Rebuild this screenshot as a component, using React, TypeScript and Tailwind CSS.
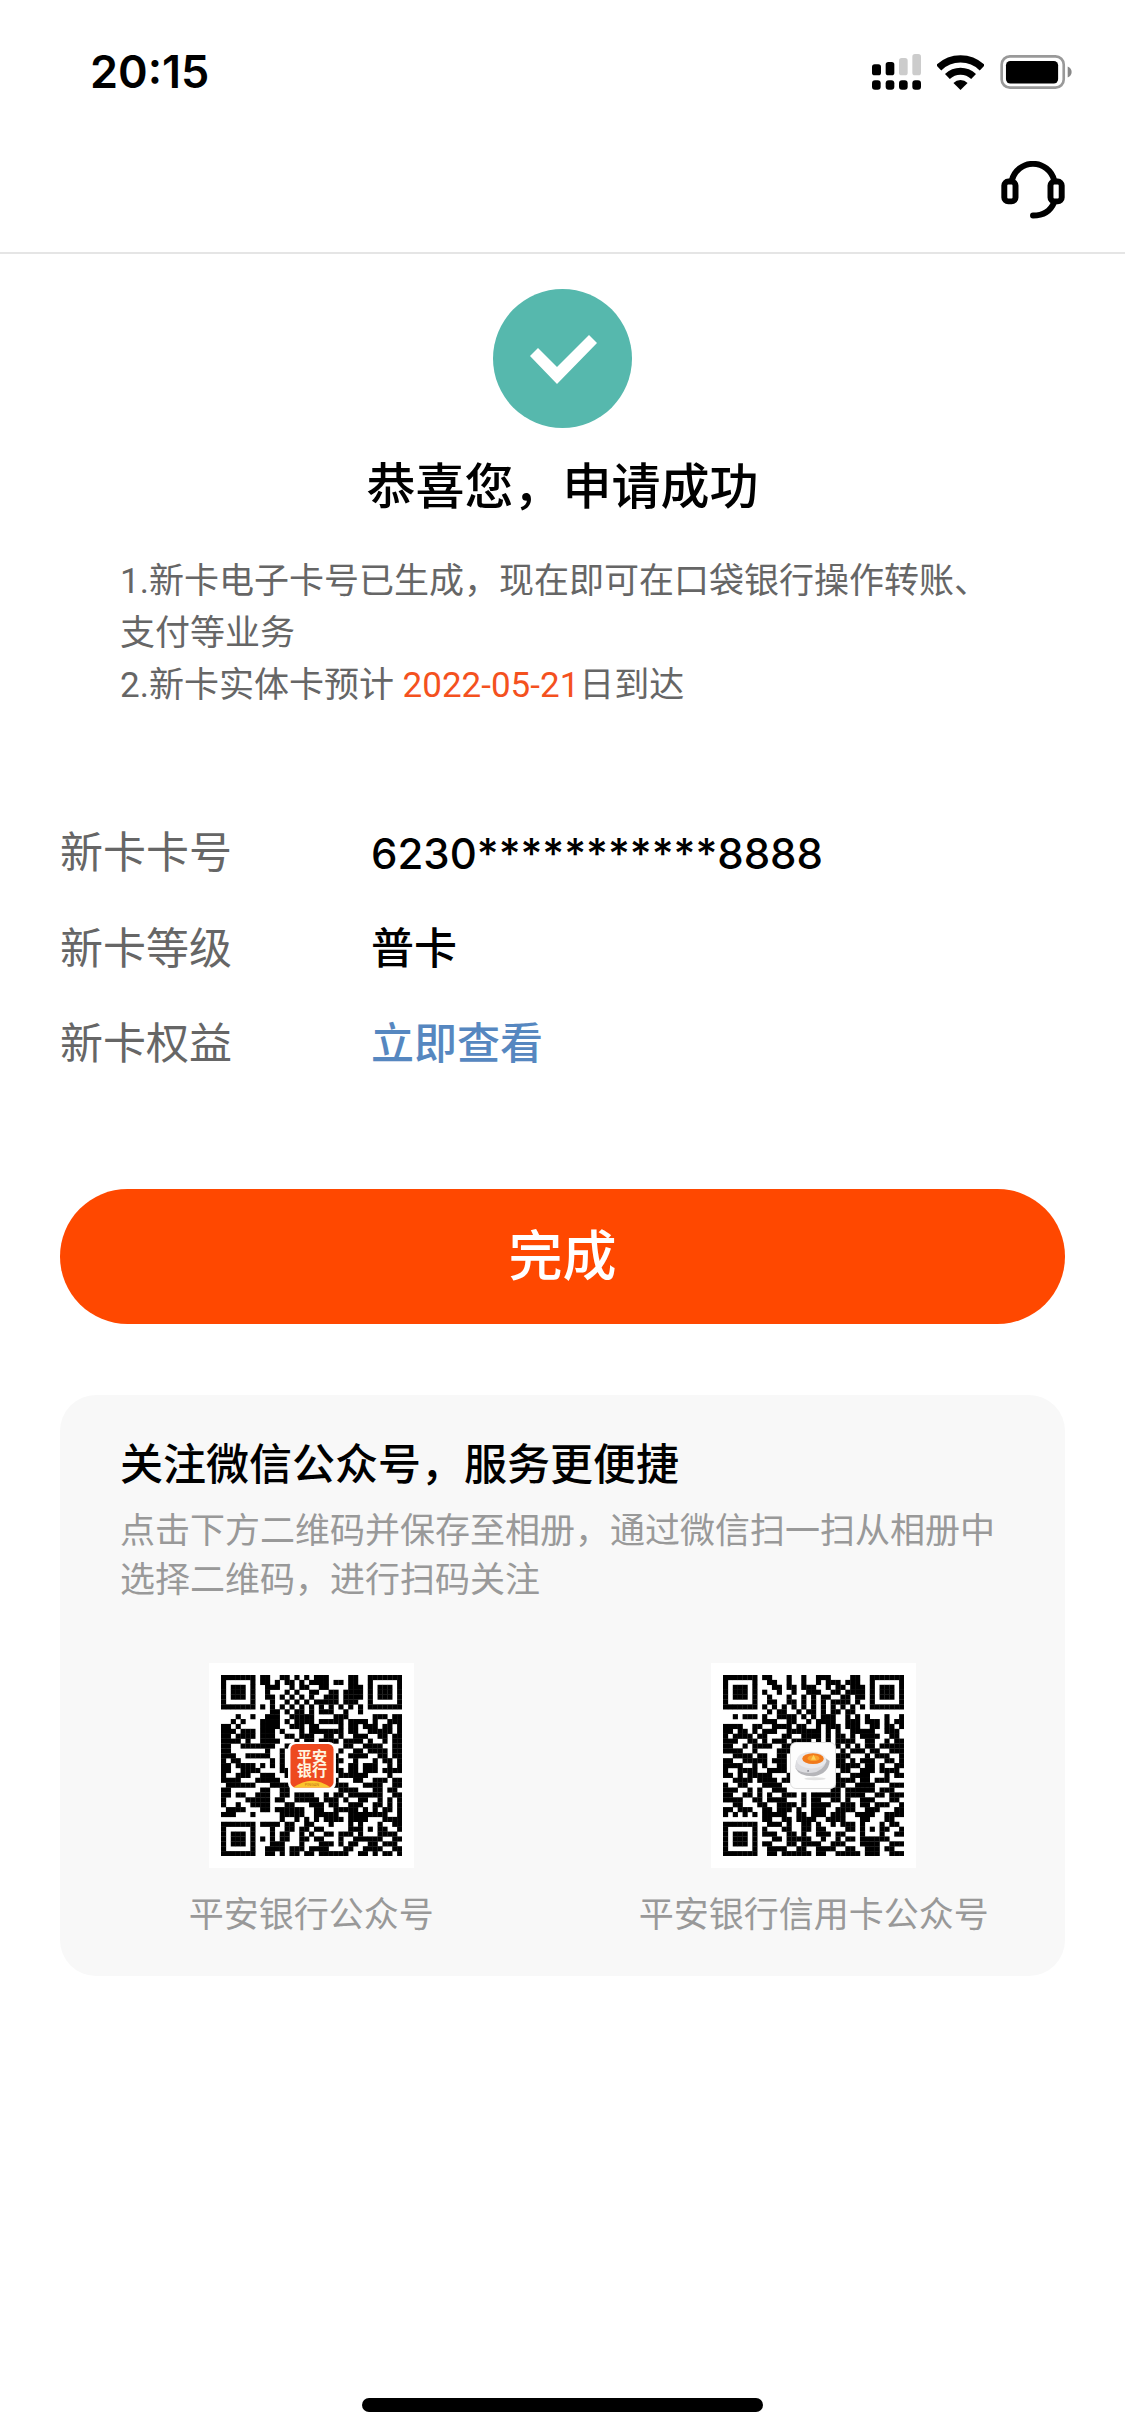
import type { ReactNode } from "react"

// "#" is a dark module
const ACCOUNT_QR = [
  "#######.##..##.#.#.###....##..#######",
  "#.....#.##.#.##.#.####.##.##..#.....#",
  "#.###.#..###..#.##..##....###.#.###.#",
  "#.###.#..#...#.#..##..##.####.#.###.#",
  "#.###.#..##.#.#.#.#..###.####.#.###.#",
  "#.....#...#..#.#.#.#####.###..#.....#",
  "#######.#.#.#.#.#.#.#.#.#.#.#.#######",
  "..........##.#.##.#.###..#..#........",
  "...#..#..###..#####....###.....###.##",
  "..#.#...####.#.####.#####.####.#..###",
  "##.#....####..###.##....#.##.###.##.#",
  "###.###.###.#...#.#######.##..#####.#",
  "##.####.###..##.###..##.#..###..##.##",
  "####.#..####...#.##.####.####.#..#.##",
  "##..#######..##..........##..####..##",
  "##.......#..#...........#..##.####.##",
  "###..#####..#..........#..####..##.##",
  "#.##......#.#..........##..#...#.##.#",
  "##.####.#.#.#..........#..##.###..#.#",
  "##..####....##.........##.##.###.####",
  "#..###..###..##.........######....#..",
  "####...#####...........#...##..###.##",
  ".######...####.........###...####..##",
  "##......##..##..........####...##.##.",
  "##.##..###..##.####..#.##.#######..##",
  "#....#####.##..#####.###.#..##..#.#.#",
  "#..#..####...##...###.##..###..##.#.#",
  ".####...##.######..##..#####.#.#.##.#",
  "###...#.....#####..#####..########..#",
  "............#..#.#.#.####.####...####",
  "#######.####.##..##...#...#.#...#..##",
  "#.....#...#..##.##.##.....###.#.##..#",
  "#.###.#...#.##..#.#..##.###.#...####.",
  "#.###.#.#.#.##..##.##...#..######..##",
  "#.###.#...###...#...###.#.##..##.###.",
  "#.....#..####.###.####...##..####..##",
  "#######..##.#.##.##.######..##.#.##.#",
]

const CREDIT_QR = [
  "#######.##...#..#..###....##..#######",
  "#.....#..##..#..#..#.###.###..#.....#",
  "#.###.#...##.##.###..#.##.###.#.###.#",
  "#.###.#.#..#..#..###..##.####.#.###.#",
  "#.###.#..#...#..#.#.##..##.##.#.###.#",
  "#.....#..##..##.#.#.#.####.#..#.....#",
  "#######.#.#.#.#.#.#.#.#.#.#.#.#######",
  ".........#.##..#.##.#.##.##..........",
  "..#.###.#..####.#.#.###..#.#.#...#..#",
  "........###..##..#.####..###.###.#.##",
  "####..##..####.##..#.###.###..##.##.#",
  "##.##.#.###..#######.#.#..#####..###.",
  "#.####.##...##..####.#.##.#.####..##.",
  "###..##.#.###.####.#.#.####..##..#.##",
  "##..#.####..##.........#.#.#.##.#####",
  "####..#....###..........#.###.##..###",
  "..####.##..##..........###...#.###..#",
  "##..#####.###..........##.#.###..##.#",
  "####..#.#..##..........#####.##.#..##",
  "#..####..####...........##..###.####.",
  "##.#.#####...#.........#..####...#.##",
  "..####.####.##.........####.##.###...",
  "#..##...####...........##..####...###",
  "###..#.#..###.........##.######.###..",
  "##..##.#.#..###.#.######.####..##.###",
  "####..##.####...#.##..##.#..###...##.",
  "..##...##..####.#.####..###.##.###..#",
  "##.###..##.###.#..###..####..###...##",
  "#.#.#.#.#####..##.###.###..####..####",
  "........##..##.####..####...##...##..",
  "#######..###.#..##.#..#.###.#...#.##.",
  "#.....#.#...##..##.##....##.#.#.##..#",
  "#.###.#.###..##.#..###.##...#...#..##",
  "#.###.#...##.#####..#..#.##.######...",
  "#.###.#.##...##.####..###...####..###",
  "#.....#..####..##..####..##..###.##..",
  "#######..##.######.##..#####.###..###",
]

const details = [
  { label: "新卡卡号", value: "6230***********8888" },
  { label: "新卡等级", value: "普卡" },
  { label: "新卡权益", value: "立即查看", href: "#benefits" },
]

function SignalIcon() {
  return (
    <svg viewBox="0 0 147 108" className="w-[49px] h-9" aria-hidden="true">
      <rect x="0" y="31" width="27" height="33" rx="8" />
      <rect x="41" y="24" width="26" height="40" rx="8" />
      <rect x="81" y="12" width="26" height="52" rx="8" fill="#cccccc" />
      <rect x="121" y="0" width="26" height="64" rx="8" fill="#cccccc" />
      {[0, 41, 81, 121].map((x) => (
        <rect key={x} x={x} y="79" width="26" height="28" rx="9" />
      ))}
    </svg>
  )
}

function WifiIcon() {
  return (
    <svg viewBox="0 0 140 104" className="w-[47px] h-[35px]" aria-hidden="true">
      <path d="M5 38A93 93 0 0 1 135 38" fill="none" stroke="#000" strokeWidth="22" />
      <path d="M31 64A57 57 0 0 1 109 64" fill="none" stroke="#000" strokeWidth="21" />
      <path d="M70 104L49 83A30 30 0 0 1 91 83Z" />
    </svg>
  )
}

function BatteryIcon() {
  return (
    <svg viewBox="0 0 216 103" className="w-[72px] h-[34px]" aria-hidden="true">
      <rect x="4" y="4" width="188" height="95" rx="25" fill="none" stroke="#999999" strokeWidth="8" />
      <rect x="17" y="18" width="158" height="68" rx="13" />
      <path d="M204 35Q216 40 216 51.5T204 68Z" fill="#888888" />
    </svg>
  )
}

function HeadsetIcon() {
  return (
    <svg viewBox="0 0 194 173" className="w-16 h-[58px]" fill="none" stroke="#000" strokeWidth="18" strokeLinecap="round" aria-hidden="true">
      <path d="M33 57A66 66 0 0 1 161 57" />
      <rect x="10" y="61" width="34" height="60" rx="12" />
      <rect x="150" y="61" width="34" height="60" rx="12" />
      <path d="M161 124C151 148 130 164 97 164" />
    </svg>
  )
}

function QrCode({ rows, name, children }: { rows: string[]; name: string; children: ReactNode }) {
  return (
    <div className="bg-white p-3">
      <svg viewBox="0 0 370 370" className="size-[181px]" role="img" aria-label={name}>
        {rows.map((row, y) =>
          [...row].map((cell, x) =>
            cell === "#" ? <rect key={`${x}-${y}`} x={x * 10} y={y * 10} width="10.5" height="10.5" /> : null
          )
        )}
        {children}
      </svg>
    </div>
  )
}

function BankLogo() {
  return (
    <>
      <rect x="137" y="137" width="98" height="98" rx="14" fill="#ffffff" />
      <rect x="142" y="141" width="88" height="89" rx="11" fill="#ee4a1f" />
      <path d="M148 230Q186 202 224 230Z" fill="#fbc52d" />
      <g fill="#fff6e0" fontSize="31" fontWeight="700" textAnchor="middle">
        <text x="186" y="178">平安</text>
        <text x="186" y="207">银行</text>
      </g>
      <text x="186" y="227" fill="#c9761a" fontSize="8" textAnchor="middle">PINGAN</text>
    </>
  )
}

function CupLogo() {
  return (
    <>
      <rect x="138" y="138" width="92" height="94" rx="11" fill="#fdfdfd" stroke="#dddddd" strokeWidth="2" />
      <ellipse cx="188" cy="212" rx="22" ry="3" fill="#e2e2e2" />
      <path d="M148 190Q156 208 186 207Q216 202 218 176L210 170Z" fill="#b5b5b9" />
      <path d="M147 188Q156 202 182 200Q204 198 212 176L150 174Z" fill="#dcdce0" />
      <ellipse cx="181" cy="174" rx="30" ry="17" fill="#e9e9ec" />
      <ellipse cx="184" cy="171" rx="22" ry="11" fill="#f17a1c" />
      <ellipse cx="185" cy="170" rx="12" ry="6" fill="#f9a12c" />
      <path d="M185 163L190 173H180Z" fill="#fdd25a" />
      <circle cx="174" cy="196" r="2" fill="#8b8b96" />
    </>
  )
}

export default function App() {
  return (
    <div className="min-h-screen flex flex-col bg-white text-black font-['Roboto','Noto_Sans_CJK_SC',sans-serif]">
      <header className="border-b-2 border-[#e5e5e5]">
        <div className="h-36 flex items-center justify-between pl-[90px] pr-[53px]">
          <span className="font-['Inter',sans-serif] font-semibold text-[45px]">20:15</span>
          <div className="flex items-center gap-4">
            <SignalIcon />
            <WifiIcon />
            <BatteryIcon />
          </div>
        </div>
        <div className="h-[108px] pb-4 px-[60px] flex items-center justify-end">
          <button type="button" aria-label="客服">
            <HeadsetIcon />
          </button>
        </div>
      </header>

      <main className="px-[60px] pt-[35px]">
        <svg viewBox="0 0 139 139" className="size-[139px] mx-auto" aria-hidden="true">
          <circle cx="69.5" cy="69.5" r="69.5" fill="#56b8ad" />
          <path d="M37 67L45 59L64 78L96 46L104 54L64 95Z" fill="#ffffff" />
        </svg>
        <h1 className="mt-6 text-center text-[49px] leading-[72px] font-medium">恭喜您，申请成功</h1>

        <div className="mt-8 px-[60px] text-[35px] leading-[52px] text-[#666666]">
          <p>1.新卡电子卡号已生成，现在即可在口袋银行操作转账、支付等业务</p>
          <p>
            2.新卡实体卡预计 <span className="text-[#f4511e]">2022-05-21</span>日到达
          </p>
        </div>

        <dl className="mt-[94px] text-[43px] leading-[95px]">
          {details.map((item) => (
            <div key={item.label} className="flex">
              <dt className="w-[311px] text-[#666666]">{item.label}</dt>
              <dd className="font-medium">
                {item.href ? (
                  <a href={item.href} className="text-[#5687c0]">{item.value}</a>
                ) : /^\d/.test(item.value) ? (
                  <span className="font-['Inter',sans-serif] text-[42px]">{item.value}</span>
                ) : (
                  item.value
                )}
              </dd>
            </div>
          ))}
        </dl>

        <button type="button" className="mt-[97px] w-full h-[135px] pt-0.5 rounded-full bg-[#ff4800] text-white text-[54px] font-medium">
          完成
        </button>

        <section className="mt-[71px] pt-10 pb-9 rounded-[36px] bg-[#f8f8f8]">
          <div className="px-[60px]">
            <h2 className="text-[43px] leading-[60px] font-medium">关注微信公众号，服务更便捷</h2>
            <p className="mt-3 text-[35px] leading-[49px] text-[#999999]">
              点击下方二维码并保存至相册，通过微信扫一扫从相册中选择二维码，进行扫码关注
            </p>
          </div>
          <div className="mt-[58px] grid grid-cols-2 text-[35px] leading-[48px] text-[#999999]">
            <div className="flex flex-col items-center gap-6">
              <QrCode rows={ACCOUNT_QR} name="平安银行公众号二维码">
                <BankLogo />
              </QrCode>
              <span>平安银行公众号</span>
            </div>
            <div className="flex flex-col items-center gap-6">
              <QrCode rows={CREDIT_QR} name="平安银行信用卡公众号二维码">
                <CupLogo />
              </QrCode>
              <span>平安银行信用卡公众号</span>
            </div>
          </div>
        </section>
      </main>

      <div className="mt-auto mx-auto mb-[23px] w-[401px] h-3.5 rounded-full bg-black" />
    </div>
  )
}
